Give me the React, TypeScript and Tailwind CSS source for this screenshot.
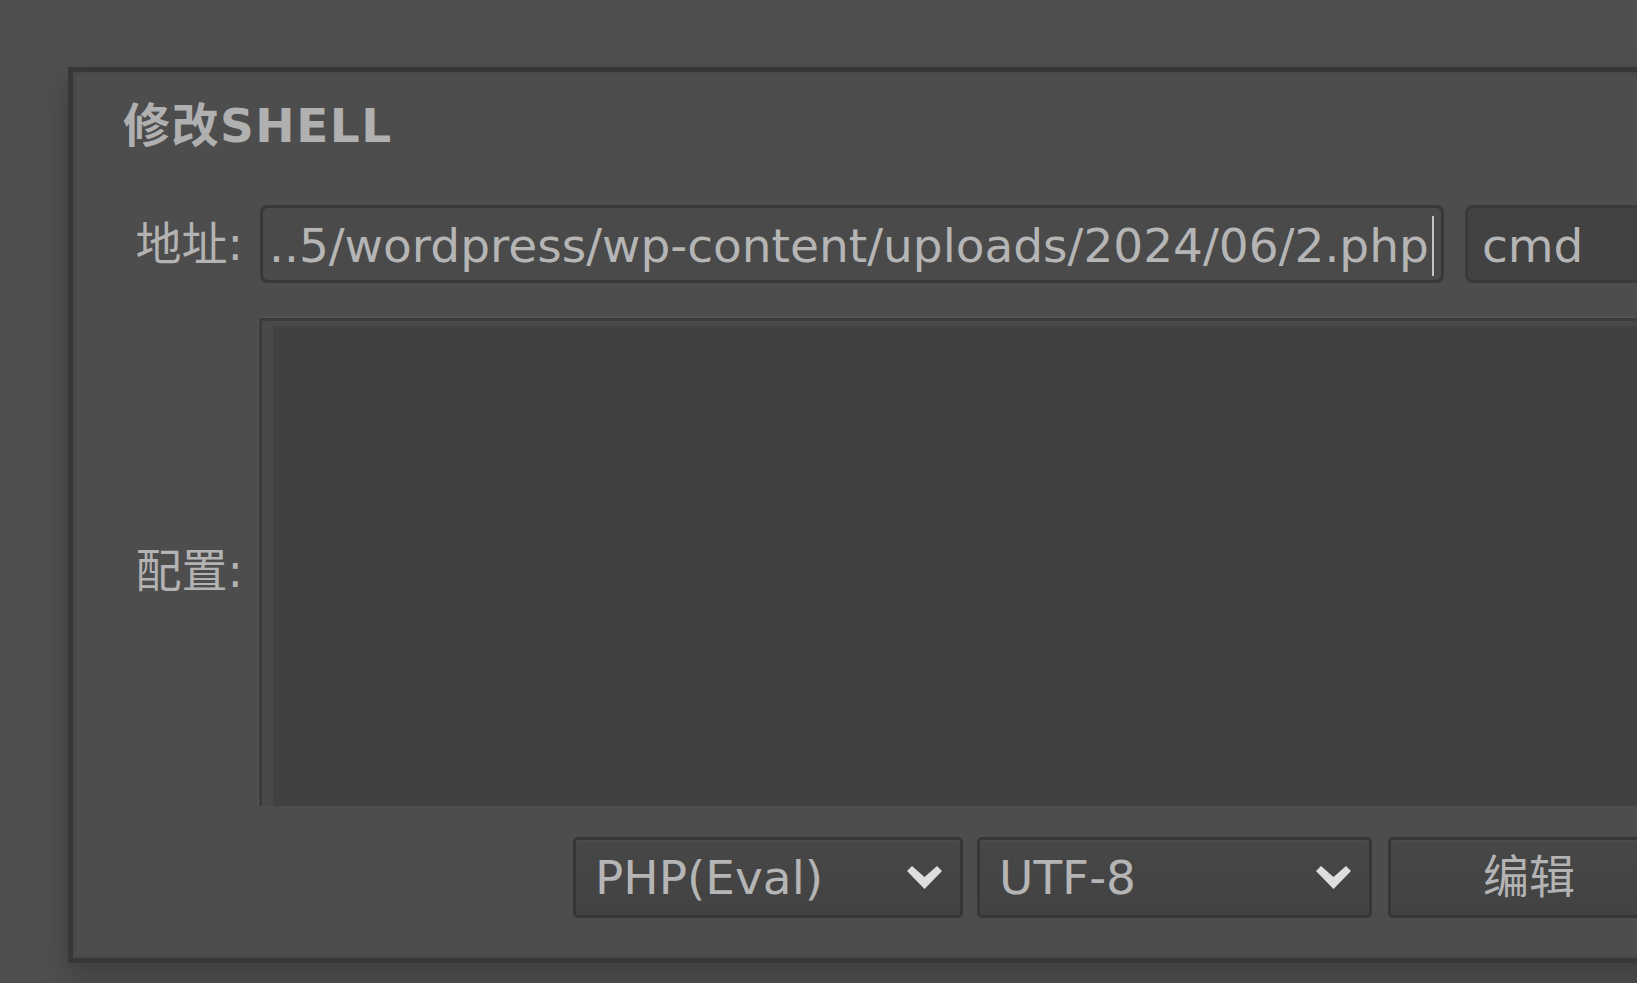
import React from "react";

function Chevron() {
  return (
    <svg width="35" height="24" viewBox="0 0 35 24" className="shrink-0">
      <polygon points="0,5 5,0 17.5,11 30,0 35,5 17.5,23" fill="#dedede" />
    </svg>
  );
}

function Select({ label, width }: { label: string; width: string }) {
  return (
    <div
      className={`${width} h-[81px] shrink-0 rounded-[5px] border-[3px] border-[#363636] bg-gradient-to-b from-[#474747] to-[#424242] shadow-[inset_0_2px_0_#4b4b4b] flex items-center justify-between pl-[19px] pr-[18px]`}
    >
      <span className="text-[47px] leading-[47px] text-[#b5b5b5] whitespace-nowrap">{label}</span>
      <Chevron />
    </div>
  );
}

export default function App() {
  return (
    <div className="w-[1637px] h-[983px] overflow-hidden bg-[#4f4f4f] pt-[67px] pl-[68px] font-['DejaVu_Sans','Noto_Sans_CJK_SC',sans-serif]">
      <div className="w-[1700px] h-[896px] border-[5px] border-[#373737] bg-[#4d4d4d] shadow-[inset_0_0_0_3px_#484848,0_14px_28px_rgba(0,0,0,0.22)] flex flex-col pt-[30px]">
        {/* Title */}
        <div className="h-[47px] leading-[47px] pl-[50px] text-[47px] font-bold tracking-[1.5px] text-[#b0b0b0] whitespace-nowrap">
          修改SHELL
        </div>

        {/* Address row */}
        <div className="mt-[56px] h-[78px] flex items-center">
          <div className="w-[170px] shrink-0 text-right text-[46px] leading-[47px] text-[#b3b3b3]">地址:</div>
          <div className="ml-[17px] w-[1184px] h-[78px] shrink-0 rounded-[8px] border-[3px] border-[#383838] bg-[#4a4a4a] flex items-center pl-[6px] pt-[3px]">
            <span className="text-[47px] leading-[47px] text-[#b5b5b5] whitespace-nowrap">
              ..5/wordpress/wp-content/uploads/2024/06/2.php
            </span>
            <span className="ml-[3px] w-[2px] h-[60px] bg-[#c4c4c4] shrink-0" />
          </div>
          <div className="ml-[21px] w-[300px] h-[78px] shrink-0 rounded-[8px] border-[3px] border-[#393939] bg-[#424242] flex items-center pl-[14px] pt-[3px]">
            <span className="text-[47px] leading-[47px] text-[#b5b5b5]">cmd</span>
          </div>
        </div>

        {/* Config row */}
        <div className="mt-[34px] h-[489px] flex">
          <div className="w-[170px] shrink-0 flex items-center justify-end pt-[20px] text-[46px] leading-[47px] text-[#b3b3b3]">
            配置:
          </div>
          <div className="ml-[15px] w-[1400px] shrink-0 border-t border-l border-[#555555] rounded-tl-[3px] flex">
            <div className="flex-1 flex flex-col border-t-[3px] border-l-[3px] border-[#3b3b3b] bg-[#494949] pl-[11px] pt-[5px]">
              <div className="flex-1 bg-[#414141]" />
            </div>
          </div>
        </div>

        {/* Bottom row */}
        <div className="mt-[31px] h-[81px] flex pl-[500px]">
          <Select label="PHP(Eval)" width="w-[390px]" />
          <div className="ml-[14px]">
            <Select label="UTF-8" width="w-[395px]" />
          </div>
          <div className="ml-[16px] w-[282px] h-[81px] shrink-0 rounded-[5px] border-[3px] border-[#363636] bg-gradient-to-b from-[#474747] to-[#424242] shadow-[inset_0_2px_0_#4b4b4b] flex items-center justify-center">
            <span className="text-[46px] leading-[47px] text-[#b3b3b3]">编辑</span>
          </div>
        </div>
      </div>
    </div>
  );
}
